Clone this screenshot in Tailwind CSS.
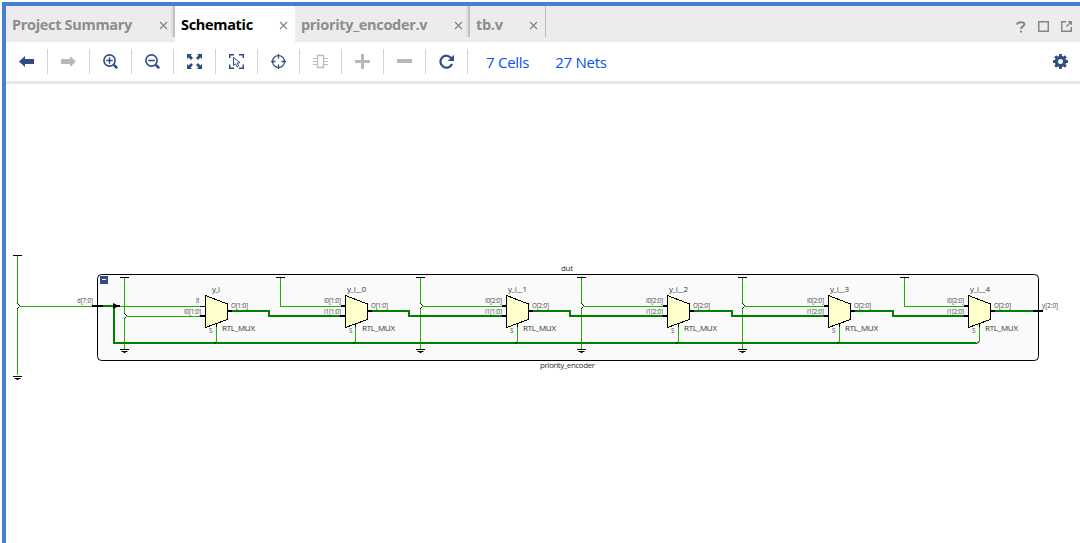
<!DOCTYPE html>
<html lang="en">
<head>
<meta charset="utf-8">
<title>Schematic</title>
<script src="https://cdn.jsdelivr.net/npm/@tailwindcss/browser@4"></script>
</head>
<body class="bg-white w-[1080px] h-[543px] overflow-hidden pt-[2px] pl-[2px] font-['Open_Sans','Noto_Sans',sans-serif]">
<div class="h-[541px] border-t-4 border-l-4 border-[#4a7ecf] flex flex-col">
  <!-- tabs -->
  <header class="h-9 shrink-0 bg-[#ececec] flex text-[14.5px] tracking-[-0.32px] leading-9 font-bold text-[#8c8c8c] whitespace-nowrap">
    <div class="w-[169px] flex items-center pl-[6px] pt-px relative"><span class="w-[147px]">Project Summary</span><svg class="w-[9px] h-[9px] mt-px" viewBox="0 0 9 9"><path d="M1 1l7 7M8 1l-7 7" stroke="#868686" stroke-width="1.3"/></svg><i class="absolute right-0 top-0 w-1 h-[31px] bg-[#e0e0e0] border-r-2 border-[#c0c0c0]"></i></div>
    <div class="w-[120px] bg-white text-black flex items-center pl-[6px] pt-px"><span class="w-[98px]">Schematic</span><svg class="w-[9px] h-[9px] mt-px" viewBox="0 0 9 9"><path d="M1 1l7 7M8 1l-7 7" stroke="#868686" stroke-width="1.3"/></svg></div>
    <div class="w-[175px] flex items-center pl-[6px] pt-px relative"><span class="w-[153px]">priority_encoder.v</span><svg class="w-[9px] h-[9px] mt-px" viewBox="0 0 9 9"><path d="M1 1l7 7M8 1l-7 7" stroke="#868686" stroke-width="1.3"/></svg><i class="absolute right-0 top-0 w-1 h-[31px] bg-[#e0e0e0] border-r-2 border-[#c0c0c0]"></i></div>
    <div class="w-[76px] flex items-center pl-[6px] pt-px relative"><span class="w-[53px]">tb.v</span><svg class="w-[9px] h-[9px] mt-px" viewBox="0 0 9 9"><path d="M1 1l7 7M8 1l-7 7" stroke="#868686" stroke-width="1.3"/></svg><i class="absolute right-0 top-0 w-px h-[31px] bg-[#bdbdbd]"></i></div>
    <div class="ml-auto flex items-center gap-3 pr-2 pt-[5px]">
      <svg class="w-[10px] h-[12px]" viewBox="0 0 10 12" fill="none"><path d="M1 3.6C1.2.5 8.4.3 8.4 3.3C8.4 5.3 5 5.4 5 8" stroke="#868686" stroke-width="2"/><path d="M4 9.5h2v2h-2z" fill="#868686"/></svg>
      <svg class="w-[11px] h-[11px]" viewBox="0 0 11 11" fill="none"><path d="M.75.75h9.5v9.5H.75z" stroke="#868686" stroke-width="1.5"/></svg>
      <svg class="w-[11px] h-[11px]" viewBox="0 0 11 11" fill="none"><path d="M5 .75H.75v9.5h9.5V6M5.500 5.500L9 2" stroke="#868686" stroke-width="1.5"/><path d="M6.5 0H11v4.5z" fill="#868686"/></svg>
    </div>
  </header>
  <!-- toolbar -->
  <div class="h-[42px] shrink-0 border-b-3 border-[#e6e6e6] flex items-center text-[#2f4d82] whitespace-nowrap">
    <div class="w-[42px] h-[25px] border-r border-[#d4d4d4] flex items-center justify-center"><svg class="w-[15px] h-[15px]" viewBox="0 0 15 15" fill="currentColor"><path d="M0 7.5L6 2v3h9v5H6v3z"/></svg></div>
    <div class="w-[42px] h-[25px] border-r border-[#d4d4d4] flex items-center justify-center"><svg class="w-[15px] h-[15px]" viewBox="0 0 15 15" fill="#b8b8b8"><path d="M15 7.5L9 2v3H0v5h9v3z"/></svg></div>
    <div class="w-[42px] h-[25px] border-r border-[#d4d4d4] flex items-center justify-center"><svg class="w-[15px] h-[15px]" viewBox="0 0 15 15" fill="none" stroke="currentColor"><circle cx="6.5" cy="6.5" r="5.6" stroke-width="1.6"/><path d="M6.5 3.3v6.4M3.3 6.5h6.4" stroke-width="1.4"/><path d="M10.8 10.8l3.4 3.4" stroke-width="2.6"/></svg></div>
    <div class="w-[42px] h-[25px] border-r border-[#d4d4d4] flex items-center justify-center"><svg class="w-[15px] h-[15px]" viewBox="0 0 15 15" fill="none" stroke="currentColor"><circle cx="6.5" cy="6.5" r="5.6" stroke-width="1.6"/><path d="M3.3 6.5h6.4" stroke-width="1.6"/><path d="M10.8 10.8l3.4 3.4" stroke-width="2.6"/></svg></div>
    <div class="w-[42px] h-[25px] border-r border-[#d4d4d4] flex items-center justify-center"><svg class="w-[15px] h-[15px]" viewBox="0 0 15 15" fill="currentColor"><path d="M0 0h5L3.6 1.6 6 4 4 6 1.6 3.6 0 5zM15 0v5l-1.6-1.4L11 6 9 4l2.4-2.4L10 0zM0 15v-5l1.6 1.4L4 9l2 2-2.4 2.4L5 15zM15 15h-5l1.4-1.6L9 11l2-2 2.4 2.4L15 10z"/></svg></div>
    <div class="w-[42px] h-[25px] border-r border-[#d4d4d4] flex items-center justify-center"><svg class="w-[15px] h-[15px]" viewBox="0 0 15 15" fill="none" stroke="currentColor"><path d="M.75 4V.75H5M10 .75h4.25V4M.75 10.5v3.75H5M10 14.25h4.25V10.5" stroke-width="1.5"/><path d="M4.5 3.5v8l2-1.7 1.6 3 1.6-.8-1.5-2.9 2.8-.4z" stroke-width="1"/></svg></div>
    <div class="w-[42px] h-[25px] border-r border-[#d4d4d4] flex items-center justify-center"><svg class="w-[15px] h-[15px]" viewBox="0 0 15 15" fill="none" stroke="currentColor"><circle cx="7.5" cy="7.5" r="6" stroke-width="1.2"/><path d="M7.5 0v4.5M7.5 10.5V15M0 7.5h4.5M10.5 7.5H15" stroke-width="1.3"/></svg></div>
    <div class="w-[42px] h-[25px] border-r border-[#d4d4d4] flex items-center justify-center"><svg class="w-[15px] h-[15px]" viewBox="0 0 15 15" fill="none" stroke="#bdbdbd"><path d="M4.5 1.5h6v12h-6z" stroke-width="1.3"/><path d="M0 4.500h4M0 7.5h4M0 10.5h4M11 4.500h4M11 7.5h4M11 10.5h4" stroke-width="1.2"/></svg></div>
    <div class="w-[42px] h-[25px] border-r border-[#d4d4d4] flex items-center justify-center"><svg class="w-[15px] h-[15px]" viewBox="0 0 15 15" fill="#b8b8b8"><path d="M6 0h3v6h6v3H9v6H6V9H0V6h6z"/></svg></div>
    <div class="w-[42px] h-[25px] border-r border-[#d4d4d4] flex items-center justify-center"><svg class="w-[15px] h-[15px]" viewBox="0 0 15 15" fill="#b8b8b8"><path d="M0 5h15v4H0z"/></svg></div>
    <div class="w-[42px] h-[25px] border-r border-[#d4d4d4] flex items-center justify-center"><svg class="w-[15px] h-[15px]" viewBox="0 0 15 15" fill="none"><path d="M12.4 4.3A6 6 0 1 0 13 10" stroke="currentColor" stroke-width="2.2"/><path d="M15 .8V7H8.8z" fill="currentColor"/></svg></div>
    <div class="pl-[18px] pt-[2px] flex gap-[26px] text-[15px] tracking-[-0.26px] text-[#0a50f0]"><span>7 Cells</span><span>27 Nets</span></div>
    <svg class="w-[15px] h-[15px] ml-auto mr-3" viewBox="0 0 15 15" fill="none" stroke="currentColor"><circle cx="7.5" cy="7.5" r="4.1" stroke-width="3.2"/><path d="M7.5 0v3M7.5 12v3M0 7.5h3M12 7.5h3M2.2 2.2l2 2M10.8 10.8l2 2M2.2 12.8l2-2M10.8 4.2l2-2" stroke-width="2.8"/></svg>
  </div>
  <!-- schematic canvas -->
  <svg class="w-[1074px] h-[459px] shrink-0 font-['Open_Sans','Noto_Sans',sans-serif]" viewBox="6 84 1074 459" fill="none">
    <defs>
      <path id="top" d="M-4.5 0h9" stroke="#000" stroke-width="1"/>
      <path id="gnd" d="M-4.5-1h9M-3 1h6M-1 2h2" stroke="#000" stroke-width="1"/>
      <g id="mux"><path d="M.5.5L22.5 9v15.5L.5 32.5z" fill="#ffffcc" stroke="#000" shape-rendering="crispEdges"/><path d="M23 16h4" stroke="#000" stroke-width="2"/></g>
      <path id="tap" d="M-.5-2.5h1v1h1v1h1v1h-1v1h-1v1h-1z" fill="#fff"/>
      <path id="dots" d="M0-3h1v1H0zM1-2h1v1H1zM2-1h1v1H2zM1 1h1v1H1zM0 2h1v1H0z" fill="#000"/>
    </defs>
    <rect x="97.5" y="274.5" width="941" height="86" rx="4" fill="#fafafa" stroke="#000"/>
    <rect x="100" y="276" width="8" height="8" fill="#2f4d82"/><path d="M102 279.5h4" stroke="#fff"/>
    <g stroke="#1db100" shape-rendering="crispEdges">
      <path d="M17.5 256v119M18 306.5h75M124.5 278v71M119 306.5h81M126 316.5h75M216.5 326v16"/>
      <path d="M280.5 278v28.500h60M355.500 326v16M420.500 278v71M422 306.500h80M517.500 326v16M581.500 278v71M583 306.500h80M678.500 326v16M742.500 278v71M744 306.500h80M839.500 326v16M904.500 278v28.500h60M979.500 326v14"/>
    </g>
    <g stroke="#008000" stroke-width="2" shape-rendering="crispEdges">
      <path d="M102 306h13M114 306v37h862M232 311h37v5h71M372 311h37v5h93M533 311h37v5h93M694 311h38v5h92M855 311h38v5h71M995 311h38"/>
    </g>
    <use href="#top" x="17.500" y="255.500"/><use href="#gnd" x="17.500" y="377.500"/>
    <use href="#top" x="124.500" y="277.500"/><use href="#top" x="280.500" y="277.500"/><use href="#top" x="420.500" y="277.500"/><use href="#top" x="581.500" y="277.500"/><use href="#top" x="742.500" y="277.500"/><use href="#top" x="904.500" y="277.500"/>
    <use href="#gnd" x="124.500" y="350.500"/><use href="#gnd" x="420.500" y="350.500"/><use href="#gnd" x="581.500" y="350.500"/><use href="#gnd" x="742.500" y="350.500"/>
    <use href="#tap" x="17.500" y="306"/><use href="#dots" x="17" y="306"/>
    <use href="#tap" x="124.500" y="316"/><use href="#dots" x="124" y="316"/>
    <use href="#tap" x="420.500" y="306"/><use href="#dots" x="420" y="306"/>
    <use href="#tap" x="581.500" y="306"/><use href="#dots" x="581" y="306"/>
    <use href="#tap" x="742.500" y="306"/><use href="#dots" x="742" y="306"/>
    <path d="M92 306h11M1033 311h10M341 306h5M340 316h5M502 306h5M502 316h5M663 306h5M663 316h5M824 306h5M824 316h5M964 306h5M964 316h5M200 316h5" stroke="#000" stroke-width="2"/>
    <path d="M200 306.500h5M216.500 323v4M355.500 323v4M517.500 323v4M678.500 323v4M839.500 323v4M979.500 323v4" stroke="#000"/>
    <path d="M214 343.500l2-1.500M353 343.500l2-1.500M515 343.500l2-1.500M676 343.500l2-1.500M837 343.500l2-1.500M976 343.500l2.500-1l1-2" stroke="#000"/>
    <path d="M113 303l4 2h3v2h-3l-4 2z" fill="#000"/>
    <use href="#mux" x="205" y="295"/><use href="#mux" x="345" y="295"/><use href="#mux" x="506" y="295"/><use href="#mux" x="667" y="295"/><use href="#mux" x="828" y="295"/><use href="#mux" x="968" y="295"/>
    <g fill="#333" font-size="8">
      <text x="561" y="271" textLength="12">dut</text><text x="540" y="368" textLength="55">priority_encoder</text>
      <text x="212" y="292" textLength="8">y_i</text><text x="347" y="292" textLength="19">y_i__0</text><text x="508" y="292" textLength="19">y_i__1</text><text x="669" y="292" textLength="19">y_i__2</text><text x="830" y="292" textLength="19">y_i__3</text><text x="970" y="292" textLength="20">y_i__4</text>
      <text x="222" y="331" textLength="33">RTL_MUX</text><text x="362" y="331" textLength="33">RTL_MUX</text><text x="523" y="331" textLength="33">RTL_MUX</text><text x="684" y="331" textLength="33">RTL_MUX</text><text x="845" y="331" textLength="33">RTL_MUX</text><text x="985" y="331" textLength="33">RTL_MUX</text>
    </g>
    <g fill="#444" font-size="6.2">
      <text x="77" y="303" textLength="16">d[7:0]</text><text x="1042" y="308" textLength="16">y[2:0]</text>
      <text x="196" y="303" textLength="4">I1</text><text x="184" y="314" textLength="17">I0[1:0]</text>
      <text x="324" y="303" textLength="17">I0[1:0]</text><text x="324" y="314" textLength="17">I1[1:0]</text>
      <text x="485" y="303" textLength="17">I0[2:0]</text><text x="485" y="314" textLength="17">I1[1:0]</text>
      <text x="646" y="303" textLength="17">I0[2:0]</text><text x="646" y="314" textLength="17">I1[2:0]</text>
      <text x="807" y="303" textLength="17">I0[2:0]</text><text x="807" y="314" textLength="17">I1[2:0]</text>
      <text x="947" y="303" textLength="17">I0[2:0]</text><text x="947" y="314" textLength="17">I1[2:0]</text>
      <text x="231" y="308" textLength="17">O[1:0]</text><text x="371" y="308" textLength="17">O[1:0]</text><text x="532" y="308" textLength="17">O[2:0]</text><text x="693" y="308" textLength="17">O[2:0]</text><text x="854" y="308" textLength="17">O[2:0]</text><text x="994" y="308" textLength="17">O[2:0]</text>
      <text x="209" y="333">S</text><text x="349" y="333">S</text><text x="510" y="333">S</text><text x="671" y="333">S</text><text x="832" y="333">S</text><text x="972" y="333">S</text>
    </g>
  </svg>
</div>
</body>
</html>
